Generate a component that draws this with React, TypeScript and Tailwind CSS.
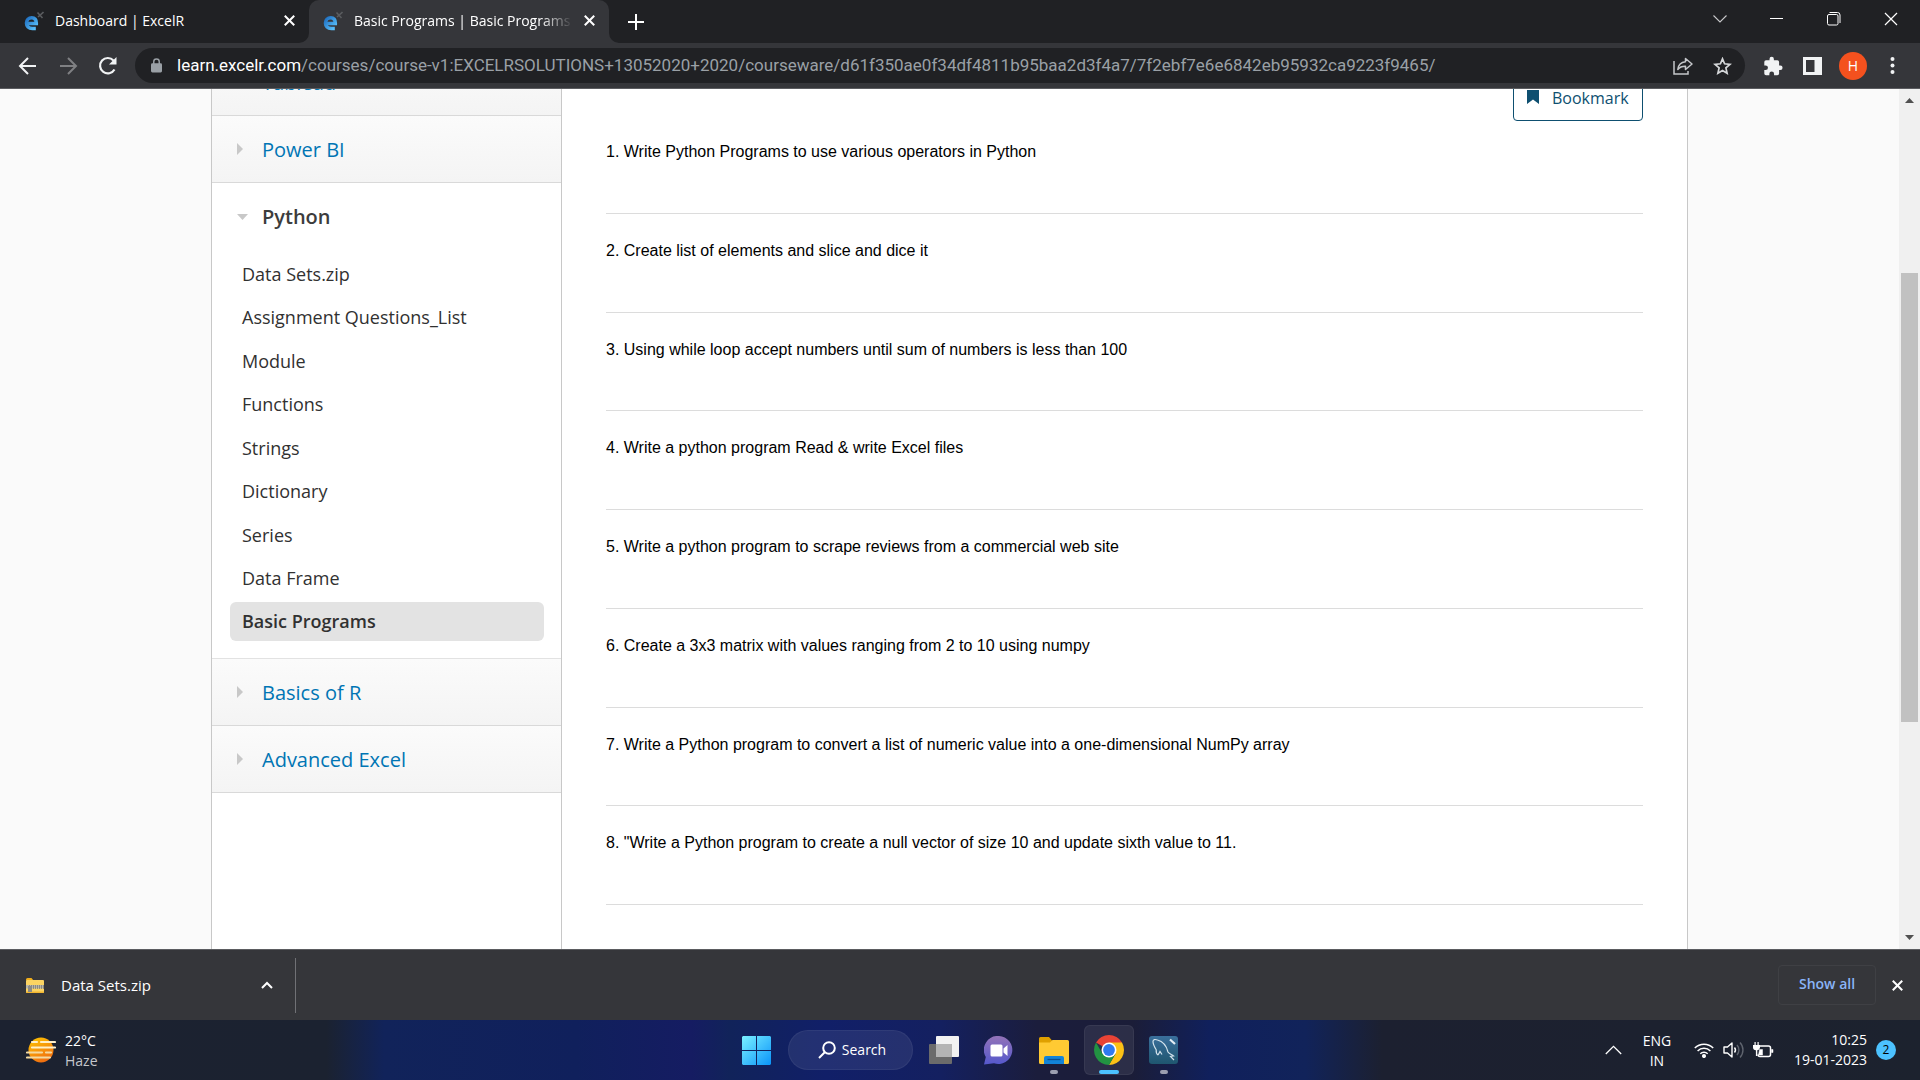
import type { ReactNode } from 'react';

const units = [
  'Data Sets.zip',
  'Assignment Questions_List',
  'Module',
  'Functions',
  'Strings',
  'Dictionary',
  'Series',
  'Data Frame',
  'Basic Programs',
];

const questions = [
  '1. Write Python Programs to use various operators in Python',
  '2. Create list of elements and slice and dice it',
  '3. Using while loop accept numbers until sum of numbers is less than 100',
  '4. Write a python program Read & write Excel files',
  '5. Write a python program to scrape reviews from a commercial web site',
  '6. Create a 3x3 matrix with values ranging from 2 to 10 using numpy',
  '7. Write a Python program to convert a list of numeric value into a one-dimensional NumPy array',
  '8. "Write a Python program to create a null vector of size 10 and update sixth value to 11.',
];

function Favicon() {
  return (
    <svg width="20" height="20" viewBox="0 0 20 20" className="shrink-0">
      <defs>
        <linearGradient id="fav" x1="0" y1="0" x2="1" y2="1">
          <stop offset="0" stopColor="#1f6fc0" />
          <stop offset="1" stopColor="#5cc4ff" />
        </linearGradient>
      </defs>
      <path d="M4 12.500h8.300c.2-3.700-1.600-5.700-4.600-5.700C4.600 6.800 2.500 8.900 2.500 12c0 3.300 2.200 5.500 5.800 5.500h3.500" fill="none" stroke="url(#fav)" strokeWidth="3.600" />
      <path d="m13.500 1.500 5 5.500M19.500 1l-5.500 5" stroke="#5a5c5f" strokeWidth="1.600" />
    </svg>
  );
}

function Cross({ size, width = 2 }: { size: number; width?: number }) {
  return (
    <svg width={size} height={size} viewBox="0 0 10 10">
      <path d="m.7.7 8.600 8.600M9.300.7.7 9.300" stroke="currentColor" strokeWidth={(width * 10) / size} />
    </svg>
  );
}

function TabStrip() {
  return (
    <header className="flex h-[43px] bg-[#202124] text-sm text-white">
      <div className="flex w-[309px] items-center pb-0.5 pl-6 pr-3">
        <Favicon />
        <span className="ml-[11px] flex-1 truncate">Dashboard | ExcelR</span>
        <button aria-label="Close Dashboard tab" className="grid size-4 place-items-center"><Cross size={11} /></button>
      </div>
      <div className="relative flex w-[300px] items-center rounded-t-[10px] bg-[#35363a] pb-0.5 pl-[14px] pr-3">
        <svg className="absolute -left-[10px] bottom-0" width="10" height="10"><path d="M10 0v10H0A10 10 0 0 0 10 0" fill="#35363a" /></svg>
        <svg className="absolute -right-[10px] bottom-0" width="10" height="10"><path d="M0 0v10h10A10 10 0 0 1 0 0" fill="#35363a" /></svg>
        <Favicon />
        <span className="ml-[11px] mr-2 flex-1 overflow-hidden whitespace-nowrap [mask-image:linear-gradient(90deg,#000_85%,transparent)]">
          Basic Programs | Basic Programs |
        </span>
        <button aria-label="Close Basic Programs tab" className="grid size-4 place-items-center"><Cross size={11} /></button>
      </div>
      <button aria-label="New tab" className="ml-[17px] grid w-5 place-items-center">
        <svg width="16" height="16" viewBox="0 0 16 16"><path d="M8 0v16M0 8h16" stroke="#fff" strokeWidth="2" /></svg>
      </button>
      <div className="ml-auto flex items-center pb-[6px]">
        <button aria-label="Search tabs" className="grid w-[57px] place-items-center">
          <svg width="14" height="8" viewBox="0 0 14 8"><path d="m.5.5 6.500 6.500 6.500-6.500" fill="none" stroke="#c8c9cb" strokeWidth="1.100" /></svg>
        </button>
        <button aria-label="Minimize" className="grid w-[57px] place-items-center"><span className="h-px w-[13px] bg-white" /></button>
        <button aria-label="Restore" className="grid w-[57px] place-items-center">
          <svg width="14" height="14" viewBox="0 0 14 14" fill="none" stroke="#fff">
            <rect x=".5" y="2.500" width="10.500" height="10.500" rx="1.500" />
            <path d="M2.500.5h8a2.500 2.500 0 0 1 2.500 2.500v8" />
          </svg>
        </button>
        <button aria-label="Close window" className="grid w-[58px] place-items-center"><Cross size={14} width={1.2} /></button>
      </div>
    </header>
  );
}

function Toolbar() {
  return (
    <nav className="flex h-[46px] items-center border-b border-[#5b5c60] bg-[#35363a] pl-[18px] pr-[25px] text-[#f1f3f4]">
      <button aria-label="Back">
        <svg width="20" height="18" viewBox="0 0 20 18" fill="none" stroke="currentColor" strokeWidth="2"><path d="M18 9H3M10 1 2 9l8 8" /></svg>
      </button>
      <button aria-label="Forward" className="ml-5 text-[#7f8083]">
        <svg width="20" height="18" viewBox="0 0 20 18" fill="none" stroke="currentColor" strokeWidth="2"><path d="M2 9h15M10 1l8 8-8 8" /></svg>
      </button>
      <button aria-label="Reload" className="ml-5">
        <svg width="20" height="20" viewBox="0 0 20 20" fill="none" stroke="currentColor" strokeWidth="2.200">
          <path d="M16.500 13.500A7.700 7.700 0 1 1 15.500 4.500L17 6.500" />
          <path d="M18.500 1v7.500H11z" fill="currentColor" stroke="none" />
        </svg>
      </button>
      <div className="ml-[17px] flex h-[35px] min-w-0 flex-1 items-center rounded-full bg-[#202124] pl-4 pr-[13px]">
        <svg width="11" height="15" viewBox="0 0 12 15" className="shrink-0">
          <rect y="5" width="12" height="10" rx="1.500" fill="#9aa0a6" />
          <path d="M3 6V3.500a3 3 0 0 1 6 0V6" fill="none" stroke="#9aa0a6" strokeWidth="1.600" />
        </svg>
        <a href="#address" className="ml-[15px] min-w-0 flex-1 overflow-hidden whitespace-nowrap font-[Roboto,sans-serif] text-[17px] text-[#9aa0a6]">
          <span className="text-white">learn.excelr.com</span>/courses/course-v1:EXCELRSOLUTIONS+13052020+2020/courseware/d61f350ae0f34df4811b95baa2d3f4a7/7f2ebf7e6e6842eb95932ca9223f9465/
        </a>
        <button aria-label="Share" className="text-[#c4c6c9]">
          <svg width="20" height="18" viewBox="0 0 20 18" fill="none" stroke="currentColor" strokeWidth="1.500">
            <path d="M1 4v13h14v-3" />
            <path d="M12.500 1.500 19 7l-6.500 5.500V9.300C9 9.200 6.800 10 4.800 12.500 5.300 8.300 8 5.200 12.500 4.800z" strokeLinejoin="round" />
          </svg>
        </button>
        <button aria-label="Bookmark this tab" className="ml-[20px] text-[#d5d7d9]">
          <svg width="19" height="18" viewBox="0 0 19 18" fill="none" stroke="currentColor" strokeWidth="1.700">
            <path d="m9.500 1.800 2.100 5 5.400.5-4.100 3.600 1.200 5.300-4.600-2.800-4.600 2.800 1.200-5.300L2 7.300l5.400-.5z" />
          </svg>
        </button>
      </div>
      <button aria-label="Extensions" className="ml-[18px]">
        <svg width="20" height="20" viewBox="1 0 22 23" fill="currentColor">
          <path d="M20.500 11H19V7a2 2 0 0 0-2-2h-4V3.500a2.500 2.500 0 0 0-5 0V5H4a2 2 0 0 0-2 2v3.800h1.500a2.700 2.700 0 0 1 0 5.400H2V20a2 2 0 0 0 2 2h3.800v-1.500a2.700 2.700 0 0 1 5.400 0V22H17a2 2 0 0 0 2-2v-4h1.500a2.500 2.500 0 0 0 0-5z" />
        </svg>
      </button>
      <button aria-label="Side panel" className="ml-5">
        <svg width="19" height="18" viewBox="0 0 19 18"><path d="M0 0h19v18H0z" fill="currentColor" /><path d="M3 3h8.500v12H3z" fill="#35363a" /></svg>
      </button>
      <button aria-label="Profile" className="ml-[17px] grid size-7 place-items-center rounded-full bg-[#f4511e] text-sm text-white">H</button>
      <button aria-label="Menu" className="ml-[23px]">
        <svg width="5" height="17" viewBox="0 0 5 17" fill="currentColor"><circle cx="2.500" cy="2" r="2" /><circle cx="2.500" cy="8.500" r="2" /><circle cx="2.500" cy="15" r="2" /></svg>
      </button>
    </nav>
  );
}

function Chapter({ name }: { name: string }) {
  return (
    <a href={'#' + name} className="flex h-[67px] items-center border-b border-[#d9d9d9] bg-linear-to-b from-[#fbfbfb] to-[#f4f4f4] pl-[25px] text-xl text-[#0075b4]">
      <svg width="6" height="12" viewBox="0 0 6 12"><path d="M0 0v12l6-6z" fill="#c8c8c8" /></svg>
      <span className="ml-[19px] pt-0.5">{name}</span>
    </a>
  );
}

function Sidebar() {
  return (
    <aside className="w-[350px] shrink-0 border-r border-[#c8c8c8]">
      <div className="-mt-10"><Chapter name="Tableau" /></div>
      <Chapter name="Power BI" />
      <section className="border-b border-[#e2e2e2] pb-[17px] pl-[18px] pr-[17px]">
        <button aria-expanded="true" className="flex h-[67px] items-center pl-[7px] text-xl font-semibold text-[#3c3c3c]">
          <svg width="11" height="6" viewBox="0 0 11 6"><path d="M0 0h11L5.500 6z" fill="#c8c8c8" /></svg>
          <span className="ml-[14px]">Python</span>
        </button>
        <ul className="mt-1 flex h-[387px] flex-col justify-between text-lg text-[#313131]">
          {units.map((u, i) => (
            <li key={u}>
              <a href={'#' + u} className={i === units.length - 1 ? 'flex h-[39px] items-center rounded-md bg-[#e3e3e3] px-3 pb-px font-semibold' : 'flex h-[39px] items-center px-3 font-medium'}>{u}</a>
            </li>
          ))}
        </ul>
      </section>
      <Chapter name="Basics of R" />
      <Chapter name="Advanced Excel" />
    </aside>
  );
}

function Page() {
  return (
    <div className="flex min-h-0 flex-1 bg-[#fafafa]">
      <div className="min-w-0 flex-1 overflow-hidden">
        <div className="mx-auto flex h-full max-w-[1477px] border-x border-[#c8c8c8] bg-white">
          <Sidebar />
          <main className="min-w-0 flex-1 px-11">
            <button className="-mt-4 ml-auto flex h-12 w-[130px] items-center rounded border border-[#0e4f70] pl-[13px] text-base text-[#0e4f70]">
              <svg width="12" height="14" viewBox="0 0 12 14"><path d="M0 0h12v14L6 9.500 0 14z" fill="currentColor" /></svg>
              <span className="ml-[13px] pt-px">Bookmark</span>
            </button>
            <div className="-mt-1.5 grid h-[790px] auto-rows-fr font-['Liberation_Sans',Arial,sans-serif] text-base text-black">
              {questions.map((q) => (
                <p key={q} className="border-b border-[#dcdcdc] pt-[25px]">{q}</p>
              ))}
            </div>
          </main>
        </div>
      </div>
      <div className="flex w-[21px] flex-col items-center justify-between bg-[#f0f0f0] py-[9px]">
        <svg width="9" height="5" viewBox="0 0 9 5"><path d="M0 5h9L4.500 0z" fill="#505050" /></svg>
        <div className="flex w-full flex-1 flex-col px-0.5">
          <div className="grow-[170]" />
          <div className="grow-[449] bg-[#c1c1c1]" />
          <div className="grow-[213]" />
        </div>
        <svg width="9" height="5" viewBox="0 0 9 5"><path d="M0 0h9L4.500 5z" fill="#505050" /></svg>
      </div>
    </div>
  );
}

function Downloads() {
  return (
    <div className="flex h-[71px] items-center border-t border-[#5b5c60] bg-[#35363a] text-[15px] text-white">
      <div className="flex h-[55px] w-[296px] items-center border-r border-[#707175] pl-[26px] pr-[22px]">
        <svg width="18" height="15" viewBox="0 0 18 15">
          <path d="M0 1.500A1.500 1.500 0 0 1 1.500 0h4L7.500 2.500H0z" fill="#f0ae1c" />
          <rect y="2" width="18" height="13" rx="1" fill="#fcd462" />
          <path d="M0 13.500h18v.5a1 1 0 0 1-1 1H1a1 1 0 0 1-1-1z" fill="#f2b630" />
          <rect y="7" width="18" height="3.500" fill="#b9b6a8" />
          <path d="M3 8h15M3 10h15" stroke="#5d5d5d" strokeDasharray="1 1" />
          <path d="M2 8h4v6H2z" fill="#8b8b86" />
        </svg>
        <span className="ml-[17px] flex-1">Data Sets.zip</span>
        <button aria-label="Download options">
          <svg width="12" height="8" viewBox="0 0 12 8"><path d="m1 7 5-5 5 5" fill="none" stroke="#fff" strokeWidth="2" /></svg>
        </button>
      </div>
      <button className="ml-auto h-10 w-[98px] rounded border border-[#3f4044] pb-0.5 text-sm font-semibold text-[#8ab4f8]">Show all</button>
      <button aria-label="Close downloads bar" className="ml-4 mr-[17px] grid place-items-center"><Cross size={11} /></button>
    </div>
  );
}

function Slot({ label, active, mark, children }: { label: string; active?: boolean; mark?: boolean; children: ReactNode }) {
  return (
    <button aria-label={label} className={active ? 'relative grid size-[50px] place-items-center rounded-md border border-white/5 bg-white/8' : 'relative grid size-[50px] place-items-center'}>
      {children}
      {active && <span className="absolute bottom-0 h-1 w-5 rounded-full bg-[#4cc2ff]" />}
      {mark && <span className="absolute bottom-px h-1 w-2 rounded-full bg-[#9c9fb0]" />}
    </button>
  );
}

function Taskbar() {
  return (
    <footer className="grid h-[60px] grid-cols-[1fr_auto_1fr] items-center bg-[linear-gradient(90deg,#1c2230_0%,#1b2230_17%,#11235a_20%,#10205c_30%,#151c62_36%,#11235a_38%,#111f68_43%,#142060_49%,#1b1d3c_54%,#1b1d38_59%,#10205c_63%,#11235a_68%,#1c2030_72%,#1c222e_100%)] text-sm text-white">
      <button className="flex items-center pl-[26px] text-left">
        <svg width="30" height="26" viewBox="0 0 30 26">
          <defs><linearGradient id="sun" x1="0" y1="0" x2=".5" y2="1"><stop stopColor="#ffc800" /><stop offset="1" stopColor="#f07010" /></linearGradient></defs>
          <circle cx="15" cy="13" r="12.500" fill="url(#sun)" />
          <path d="M6 5h5M15 5h14M6 10.500h23" stroke="#fff0c8" strokeWidth="2.200" strokeLinecap="round" />
          <path d="M1 15.500h15M20 15.500h5M1 20.500h23" stroke="#f3d9a0" strokeWidth="2.200" strokeLinecap="round" />
        </svg>
        <span className="ml-[9px] pt-0.5 leading-5">22°C<br /><span className="text-[#c5c7cc]">Haze</span></span>
      </button>
      <div className="flex items-center gap-[5px]">
        <Slot label="Start">
          <svg width="29" height="29" viewBox="0 0 29 29">
            <defs><linearGradient id="win" x1="0" y1="0" x2="1" y2="1"><stop stopColor="#7af0ff" /><stop offset="1" stopColor="#0a94fa" /></linearGradient></defs>
            <path d="M1 0h13v14H0V1zM15 0h13l1 1v13H15zM0 15h14v14H1l-1-1zM15 15h14v13l-1 1H15z" fill="url(#win)" />
          </svg>
        </Slot>
        <button className="mx-px flex h-10 w-[125px] items-center justify-center gap-[6px] rounded-full border border-white/5 bg-white/8 pl-1">
          <svg width="18" height="18" viewBox="0 0 18 18" fill="none" stroke="#fff" strokeWidth="2"><circle cx="11" cy="7" r="5.800" /><path d="m7 11-6 6" /></svg>
          Search
        </button>
        <Slot label="Task view">
          <svg width="30" height="28" viewBox="0 0 30 28">
            <rect x="7" width="23" height="21" rx="1" fill="#f2f2f2" />
            <rect y="8" width="23" height="20" rx="1" fill="#6b6b6b" />
            <path d="M7 8h16v13H7z" fill="#b4b4b4" />
          </svg>
        </Slot>
        <Slot label="Chat">
          <svg width="30" height="29" viewBox="0 0 30 29">
            <defs><linearGradient id="chat" x1="0" y1="0" x2="0" y2="1"><stop stopColor="#9373b8" /><stop offset="1" stopColor="#5558cc" /></linearGradient></defs>
            <path d="M15 0a14 14 0 1 1-5 27.300L0 28.500l1.800-7.500A14 14 0 0 1 15 0z" fill="url(#chat)" />
            <rect x="6.500" y="8.500" width="12" height="12" rx="1.500" fill="#fff" />
            <path d="m19.500 12.500 4-3.500v11l-4-3.500z" fill="#fff" />
          </svg>
        </Slot>
        <Slot label="File Explorer" mark>
          <svg width="30" height="27" viewBox="0 0 30 27">
            <path d="M0 1.500A1.500 1.500 0 0 1 1.500 0H10l3 3.500V8H0z" fill="#dfa000" />
            <path d="M0 5.500h11L13.500 3H28.500A1.500 1.500 0 0 1 30 4.500V25.500a1.500 1.500 0 0 1-1.500 1.500h-27A1.500 1.500 0 0 1 0 25.500z" fill="#ffca33" />
            <path d="M5 27v-6a2 2 0 0 1 2-2h16a2 2 0 0 1 2 2v6z" fill="#1283d8" />
            <path d="M8.500 22.500h13" stroke="#0a4f92" strokeWidth="1.300" />
          </svg>
        </Slot>
        <Slot label="Google Chrome" active>
          <svg width="30" height="30" viewBox="0 0 30 30">
            <path d="M15 15 2.010 7.500A15 15 0 0 1 27.990 7.500z" fill="#e94335" />
            <path d="M15 7.500h12.990A15 15 0 0 1 15 30L21.500 18.700z" fill="#fbc116" />
            <path d="M8.500 18.700 2.010 7.500A15 15 0 0 0 15 30l6.500-11.300z" fill="#229342" />
            <circle cx="15" cy="15" r="7.500" fill="#fff" />
            <circle cx="15" cy="15" r="5.900" fill="#2f7af0" />
          </svg>
        </Slot>
        <Slot label="MySQL Workbench" mark>
          <svg width="29" height="28" viewBox="0 0 29 28">
            <defs><linearGradient id="sql" x1="0" y1="0" x2="0" y2="1"><stop stopColor="#3a6f9c" /><stop offset="1" stopColor="#1f566f" /></linearGradient></defs>
            <rect width="29" height="28" rx="3" fill="url(#sql)" />
            <path d="M9 19c-1.500-1-2-3-1.800-5.200C5.500 11 4 8 4 5.500 4 3.500 6 3 8.500 4c6 1.500 9 6 10.500 12 1 1.500 3.500 2.500 5.500 4l-3 .5 3.500 3.500M9 19l2-3.500 2 3" fill="none" stroke="#d3e3ec" strokeWidth="1.200" />
            <path d="m21 3.500 5 4.500" stroke="#e5eef4" strokeWidth="2.200" />
          </svg>
        </Slot>
      </div>
      <div className="flex items-center justify-end pr-6">
        <button aria-label="Hidden icons">
          <svg width="17" height="10" viewBox="0 0 17 10"><path d="m.8 9 7.700-7.700L16.200 9" fill="none" stroke="#fff" strokeWidth="1.300" /></svg>
        </button>
        <button className="ml-5 w-[30px] pt-0.5 text-center leading-5">ENG<br />IN</button>
        <button aria-label="Network, volume and battery" className="ml-[22px] flex items-center gap-[9px]">
          <svg width="20" height="16" viewBox="0 0 20 16" fill="none" stroke="#fff" strokeWidth="1.500">
            <path d="M.8 6a13 13 0 0 1 18.400 0M3.600 9a9 9 0 0 1 12.800 0M6.300 11.800a5.300 5.300 0 0 1 7.400 0" />
            <circle cx="10" cy="14" r="1.300" fill="#fff" />
          </svg>
          <svg width="21" height="18" viewBox="0 0 21 18" fill="none" stroke="#fff" strokeWidth="1.400">
            <path d="M1 6h3.500L9 2v14l-4.500-4H1z" strokeLinejoin="round" />
            <path d="M11.500 6.500a4 4 0 0 1 0 5" />
            <path d="M14 4a7.500 7.500 0 0 1 0 10M17 1.500a11 11 0 0 1 0 15" stroke="#5f646e" />
          </svg>
          <svg width="21" height="16" viewBox="0 0 21 16">
            <path d="M7 4h8.500A2 2 0 0 1 17.500 6v6.500a2 2 0 0 1-2 2H7a2 2 0 0 1-2-2" fill="none" stroke="#fff" strokeWidth="1.500" />
            <path d="M18.500 7.500h1.500v3h-1.500zM6.500 7.500h3v5.500h-4z" fill="#fff" stroke="#fff" strokeWidth=".5" />
            <path d="M0 3h7v2.500A3 3 0 0 1 4.300 8.300V14H2.900V8.300A3 3 0 0 1 0 5.500zM1.500 0h1.200v3H1.500zM4.500 0h1.200v3H4.500z" fill="#fff" />
          </svg>
        </button>
        <button className="ml-5 text-right leading-5">10:25<br />19-01-2023</button>
        <span className="ml-[9px] grid size-5 place-items-center rounded-full bg-[#4cc2ff] text-xs text-black">2</span>
      </div>
    </footer>
  );
}

export default function App() {
  return (
    <div className="flex h-screen flex-col overflow-hidden font-['Open_Sans','Noto_Sans',sans-serif]">
      <TabStrip />
      <Toolbar />
      <Page />
      <Downloads />
      <Taskbar />
    </div>
  );
}
